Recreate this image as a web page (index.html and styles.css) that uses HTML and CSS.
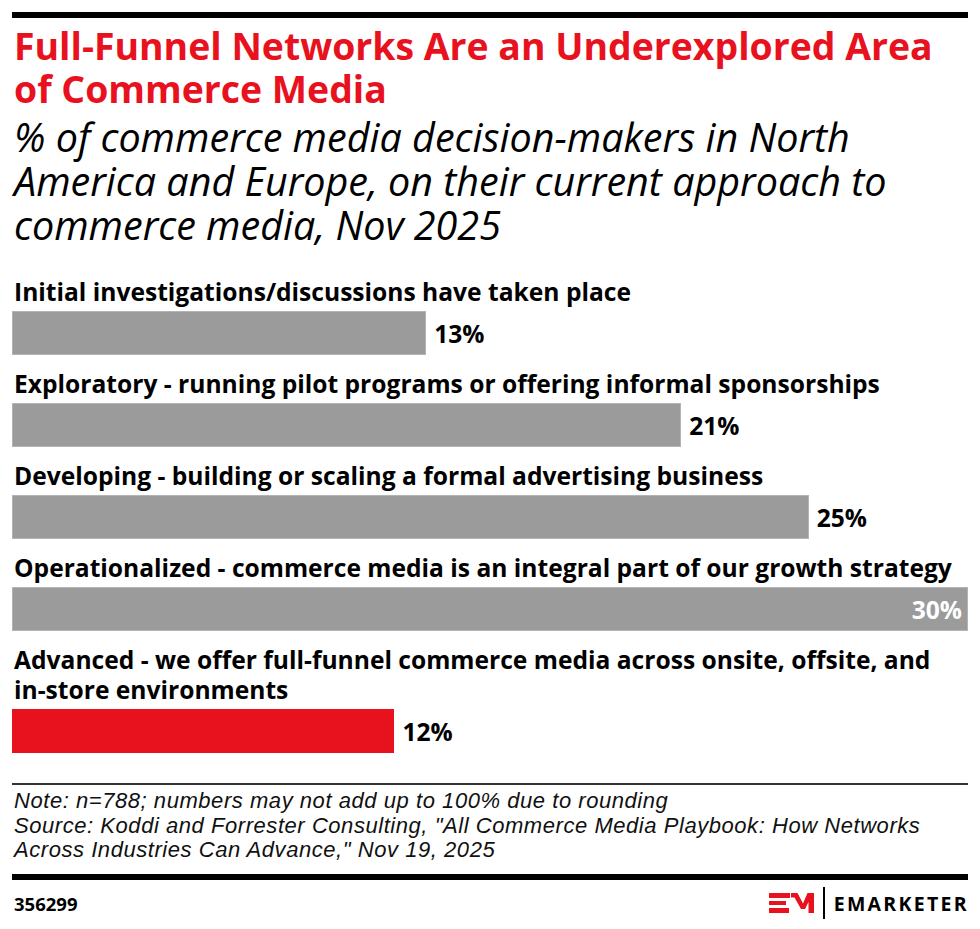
FILE: index.html
```html
<!DOCTYPE html>
<html lang="en">
<head>
<meta charset="utf-8">
<title>Full-Funnel Networks Are an Underexplored Area of Commerce Media</title>
<link rel="stylesheet" href="styles.css">
</head>
<body>
<div class="chart">
  <div class="rule-top"></div>
  <h1 class="title">Full-Funnel Networks Are an Underexplored Area of Commerce Media</h1>
  <p class="subtitle">% of commerce media decision-makers in North America and Europe, on their current approach to commerce media, Nov 2025</p>

  <div class="rows">
    <div class="row">
      <div class="label">Initial investigations/discussions have taken place</div>
      <div class="track"><div class="bar" style="width:43.33%"></div><span class="value">13%</span></div>
    </div>
    <div class="row">
      <div class="label">Exploratory - running pilot programs or offering informal sponsorships</div>
      <div class="track"><div class="bar" style="width:70%"></div><span class="value">21%</span></div>
    </div>
    <div class="row">
      <div class="label">Developing - building or scaling a formal advertising business</div>
      <div class="track"><div class="bar" style="width:83.33%"></div><span class="value">25%</span></div>
    </div>
    <div class="row">
      <div class="label">Operationalized - commerce media is an integral part of our growth strategy</div>
      <div class="track"><div class="bar" style="width:100%"><span class="value value-in">30%</span></div></div>
    </div>
    <div class="row">
      <div class="label">Advanced - we offer full-funnel commerce media across onsite, offsite, and in-store environments</div>
      <div class="track"><div class="bar bar-red" style="width:40%"></div><span class="value">12%</span></div>
    </div>
  </div>

  <div class="notes">
    <p class="notes-text">Note: n=788; numbers may not add up to 100% due to rounding</p>
    <p class="notes-text">Source: Koddi and Forrester Consulting, "All Commerce Media Playbook: How Networks Across Industries Can Advance," Nov 19, 2025</p>
  </div>

  <div class="footer">
    <span class="chart-id">356299</span>
    <div class="brand">
      <svg class="brand-mark" width="45" height="20" viewBox="0 0 45 20" aria-hidden="true">
        <rect x="0" y="0" width="21" height="5" fill="#e8121f"/>
        <rect x="0" y="8" width="17" height="4" fill="#e8121f"/>
        <rect x="0" y="15" width="20" height="5" fill="#e8121f"/>
        <polygon points="22,0 28.5,0 34,10.5 38.5,0 45,0 45,20 39.5,20 39.5,9 36,16 32,16 25.5,4.5 22,4.5" fill="#e8121f"/>
      </svg>
      <span class="brand-sep"></span>
      <span class="brand-name">EMARKETER</span>
    </div>
  </div>
</div>
</body>
</html>
```
FILE: styles.css
```css
html, body {
  margin: 0;
  padding: 0;
  background: #fff;
}

body {
  font-family: "Open Sans", "Liberation Sans", sans-serif;
  color: #000;
}

.chart {
  width: 956px;
  padding: 12px 12px 0 12px;
}

.rule-top {
  height: 6px;
  background: #000;
}

.title {
  margin: 6px 0 0 2px;
  font-size: 37.4px;
  line-height: 43px;
  font-weight: 700;
  color: #e8121f;
}

.subtitle {
  margin: 5px 0 0 2px;
  font-size: 39.5px;
  line-height: 44px;
  font-style: italic;
  font-weight: 400;
}

.rows {
  margin-top: 30px;
  display: flex;
  flex-direction: column;
  gap: 14px;
}

.label {
  font-size: 24.6px;
  line-height: 30px;
  font-weight: 700;
  padding-left: 2px;
  margin-bottom: 4px;
}

.track {
  display: flex;
  align-items: center;
  height: 44px;
}

.bar {
  height: 44px;
  background: #9b9b9b;
  box-shadow: inset 0 0 0 1px #b3b3b3;
  flex: none;
  display: flex;
  align-items: center;
  justify-content: flex-end;
}

.bar-red {
  background: #e8121f;
  box-shadow: none;
}

.value {
  font-size: 24.6px;
  font-weight: 700;
  margin-left: 8px;
}

.value-in {
  color: #fff;
  margin: 0 6px 0 0;
}

.notes {
  margin-top: 30px;
  border-top: 2px solid #333;
  padding-top: 4px;
  padding-bottom: 11px;
}

.notes-text {
  margin: 0;
  padding-left: 2px;
  font-family: "Liberation Sans", "Open Sans", sans-serif;
  font-size: 22px;
  line-height: 24.7px;
  letter-spacing: 0.55px;
  font-style: italic;
  font-weight: 400;
  color: #111;
}

.footer {
  border-top: 6px solid #000;
  display: flex;
  align-items: center;
  justify-content: space-between;
  padding-top: 7px;
}

.chart-id {
  font-size: 18.5px;
  font-weight: 700;
  padding-left: 2px;
}

.brand {
  display: flex;
  align-items: center;
  gap: 9px;
}

.brand-mark {
  display: block;
}

.brand-sep {
  width: 2px;
  height: 32px;
  background: #000;
}

.brand-name {
  font-size: 19.5px;
  font-weight: 700;
  letter-spacing: 2.3px;
  margin-right: -1px;
}
```
